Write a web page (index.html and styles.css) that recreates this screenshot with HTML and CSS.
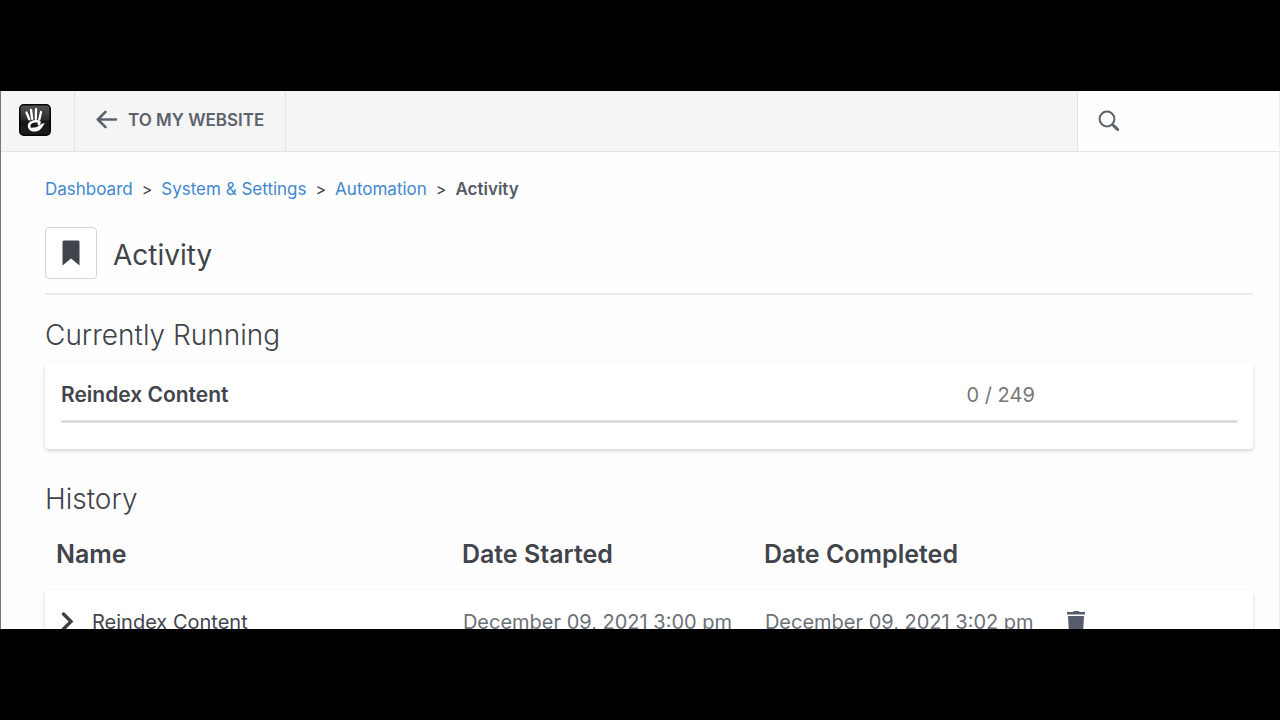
FILE: index.html
```html
<!DOCTYPE html>
<html lang="en">
<head>
    <meta charset="UTF-8">
    <title>Activity</title>
    <link rel="stylesheet" href="styles.css">
</head>
<body>
<div class="window">
    <header class="toolbar">
        <a class="logo" href="#" aria-label="Home">
            <svg width="32" height="32" viewBox="0 0 32 32">
                <defs>
                    <linearGradient id="logoShade" x1="0" y1="0" x2="0" y2="1">
                        <stop offset="0" stop-color="#555"/>
                        <stop offset="0.5" stop-color="#2b2b2b"/>
                        <stop offset="0.55" stop-color="#181818"/>
                        <stop offset="1" stop-color="#1c1c1c"/>
                    </linearGradient>
                </defs>
                <rect x="0.75" y="0.75" width="30.5" height="30.5" rx="4" fill="url(#logoShade)" stroke="#050505" stroke-width="1.5"/>
                <g fill="none" stroke="#fff" stroke-linecap="round">
                    <path d="M7.5 8.5L10.3 15.4" stroke-width="2.3"/>
                    <path d="M12 6L13.2 14.8" stroke-width="2.4"/>
                    <path d="M17 5.2L16.8 14.8" stroke-width="2.4"/>
                    <path d="M22 8L20.3 15.4" stroke-width="2.3"/>
                    <path d="M19.8 20C21.8 17.6 19.5 17 16 17.2C12 17.5 9.2 20 10.4 23" stroke-width="2.6"/>
                </g>
                <path d="M9.1 21C10.6 24.2 13 23.9 15.5 23.6C20 23 21.4 19 26 19.2C24.6 20.2 23.8 23.4 21.2 25.6C18 28.4 12.6 28.2 10.2 25.4C9.2 24.2 8.8 22.4 9.1 21Z" fill="#fff"/>
            </svg>
        </a>
        <a class="back" href="#">
            <svg width="22" height="20" viewBox="0 0 22 20" fill="none" stroke="#5b626d" stroke-width="2.6" stroke-linecap="round" stroke-linejoin="round">
                <path d="M20 9.5H2M9.5 1.8L1.8 9.5L9.5 17.2"/>
            </svg>
            <span>TO MY WEBSITE</span>
        </a>
        <label class="search">
            <svg width="22" height="22" viewBox="0 0 22 22" fill="none" stroke="#5b626d">
                <circle cx="9" cy="9" r="7.4" stroke-width="2"/>
                <path d="M14.3 14.3L15.8 15.8" stroke-width="2"/>
                <path d="M15.8 15.8L19.7 19.5" stroke-width="3" stroke-linecap="round"/>
            </svg>
            <input type="search" aria-label="Search">
        </label>
    </header>

    <main class="content">
        <nav class="breadcrumb">
            <a href="#">Dashboard</a>
            <span>&gt;</span>
            <a href="#">System &amp; Settings</a>
            <span>&gt;</span>
            <a href="#">Automation</a>
            <span>&gt;</span>
            <strong>Activity</strong>
        </nav>

        <div class="page-title">
            <button type="button" class="bookmark" aria-label="Bookmark">
                <svg width="18" height="26" viewBox="0 0 18 26">
                    <path d="M0.5 2Q0.5 0.5 2 0.5H16Q17.5 0.5 17.5 2V25.5L9 18.5L0.5 25.5Z" fill="#41444b"/>
                </svg>
            </button>
            <h1>Activity</h1>
        </div>

        <section class="running">
            <h2>Currently Running</h2>
            <div class="card">
                <div class="card-row">
                    <label class="task" for="reindex">Reindex Content</label>
                    <span class="count">0 / 249</span>
                </div>
                <progress id="reindex" value="0" max="249"></progress>
            </div>
        </section>

        <section class="history">
            <h2>History</h2>
            <table>
                <colgroup>
                    <col class="col-name">
                    <col class="col-date">
                    <col class="col-date">
                    <col>
                </colgroup>
                <thead>
                    <tr>
                        <th>Name</th>
                        <th>Date Started</th>
                        <th>Date Completed</th>
                        <th></th>
                    </tr>
                </thead>
                <tbody>
                    <tr>
                        <td>
                            <div class="name">
                                <button type="button" class="plain" aria-label="Expand">
                                    <svg width="14" height="20" viewBox="0 0 14 20" fill="none" stroke="#3b3f46" stroke-width="3.4" stroke-linecap="round">
                                        <path d="M2.5 2L10 9.5L2.5 17"/>
                                    </svg>
                                </button>
                                <span>Reindex Content</span>
                            </div>
                        </td>
                        <td class="date">December 09, 2021 3:00 pm</td>
                        <td class="date">December 09, 2021 3:02 pm</td>
                        <td>
                            <button type="button" class="plain" aria-label="Delete">
                                <svg width="20" height="24" viewBox="0 0 20 24" fill="#565c69">
                                    <path d="M0 2H6Q6.5 1 7.5 1H11Q12 1 12.5 2H18V4.5H0Z"/>
                                    <path d="M1 6H17L16 24H2Z"/>
                                </svg>
                            </button>
                        </td>
                    </tr>
                </tbody>
            </table>
        </section>
    </main>
</div>
</body>
</html>
```
FILE: styles.css
```css
* {
    box-sizing: border-box;
}

body {
    margin: 0;
    padding: 91px 0;
    height: 100vh;
    background-color: #000;
    color: #41444b;
    font-family: Inter, "Liberation Sans", sans-serif;
}

.window {
    height: 100%;
    overflow: hidden;
    background-color: #fefefe;
    border-left: 1px solid #777;
    border-right: 1px solid #eee;
}

a {
    text-decoration: none;
}

h1, h2 {
    margin: 0;
}

.toolbar {
    display: flex;
    height: 61px;
    background-color: #f5f5f5;
    border-bottom: 1px solid #e2e3e7;
}

.logo, .back {
    display: flex;
    align-items: center;
    padding-bottom: 3px;
    border-right: 1px solid #e2e3e7;
}

.logo {
    width: 74px;
    padding-left: 18px;
}

.back {
    gap: 10px;
    padding-left: 21px;
    padding-right: 21px;
    color: #5b626d;
    font-size: 17px;
    font-weight: 600;
}

.search {
    display: flex;
    align-items: center;
    width: 202px;
    margin-left: auto;
    padding-left: 20px;
    background-color: #fefefe;
    border-left: 1px solid #e2e3e7;
}

.search input {
    flex: 1;
    min-width: 0;
    border: none;
    outline: none;
    background: none;
}

.content {
    padding: 26px 26px 0 44px;
}

.breadcrumb {
    display: flex;
    gap: 9px;
    font-size: 17px;
    line-height: 22px;
}

.breadcrumb a {
    color: #3f87d0;
}

.breadcrumb span {
    font-size: 16px;
}

.breadcrumb strong {
    font-weight: 600;
    color: #555a65;
}

.page-title {
    display: flex;
    align-items: center;
    gap: 16px;
    margin-top: 27px;
    padding-bottom: 14px;
    border-bottom: 2px solid #ebebee;
}

.bookmark {
    display: flex;
    align-items: center;
    justify-content: center;
    width: 52px;
    height: 52px;
    padding: 0;
    background-color: #fff;
    border: 1px solid #d5d5d7;
    border-radius: 4px;
}

h1 {
    padding-top: 4px;
    font-size: 28px;
    font-weight: 400;
    line-height: 40px;
}

h2 {
    font-size: 28px;
    font-weight: 300;
    line-height: 40px;
}

.running {
    margin-top: 20px;
}

.card {
    margin-top: 8px;
    padding: 16px 16px 26px;
    background-color: #fff;
    border-radius: 4px;
    box-shadow: 0 2px 4px rgba(0, 0, 0, 0.16);
}

.card-row {
    display: flex;
    font-size: 20px;
    line-height: 32px;
}

.task {
    width: 77%;
    font-size: 21px;
    font-weight: 600;
}

.count {
    color: #777;
}

progress {
    display: block;
    width: 100%;
    height: 3px;
    margin-top: 9px;
    border: none;
    background-color: #d9dddd;
    appearance: none;
}

progress::-webkit-progress-bar {
    background-color: #d9dddd;
}

.history {
    margin-top: 30px;
}

table {
    width: 100%;
    table-layout: fixed;
    border-collapse: separate;
    border-spacing: 0;
}

.col-name {
    width: 33.6%;
}

.col-date {
    width: 25%;
}

th {
    height: 71px;
    padding: 0 11px 1px;
    font-size: 25px;
    font-weight: 600;
    text-align: left;
    white-space: nowrap;
}

tbody tr {
    background-color: #fff;
    border-radius: 4px;
    box-shadow: 0 2px 4px rgba(0, 0, 0, 0.16);
}

td {
    height: 64px;
    padding: 0 12px;
    font-size: 20px;
    white-space: nowrap;
}

.name {
    display: flex;
    align-items: center;
    gap: 17px;
    padding-left: 4px;
}

.date {
    color: #6c7078;
}

.plain {
    display: flex;
    padding: 0;
    background: none;
    border: none;
}
```
